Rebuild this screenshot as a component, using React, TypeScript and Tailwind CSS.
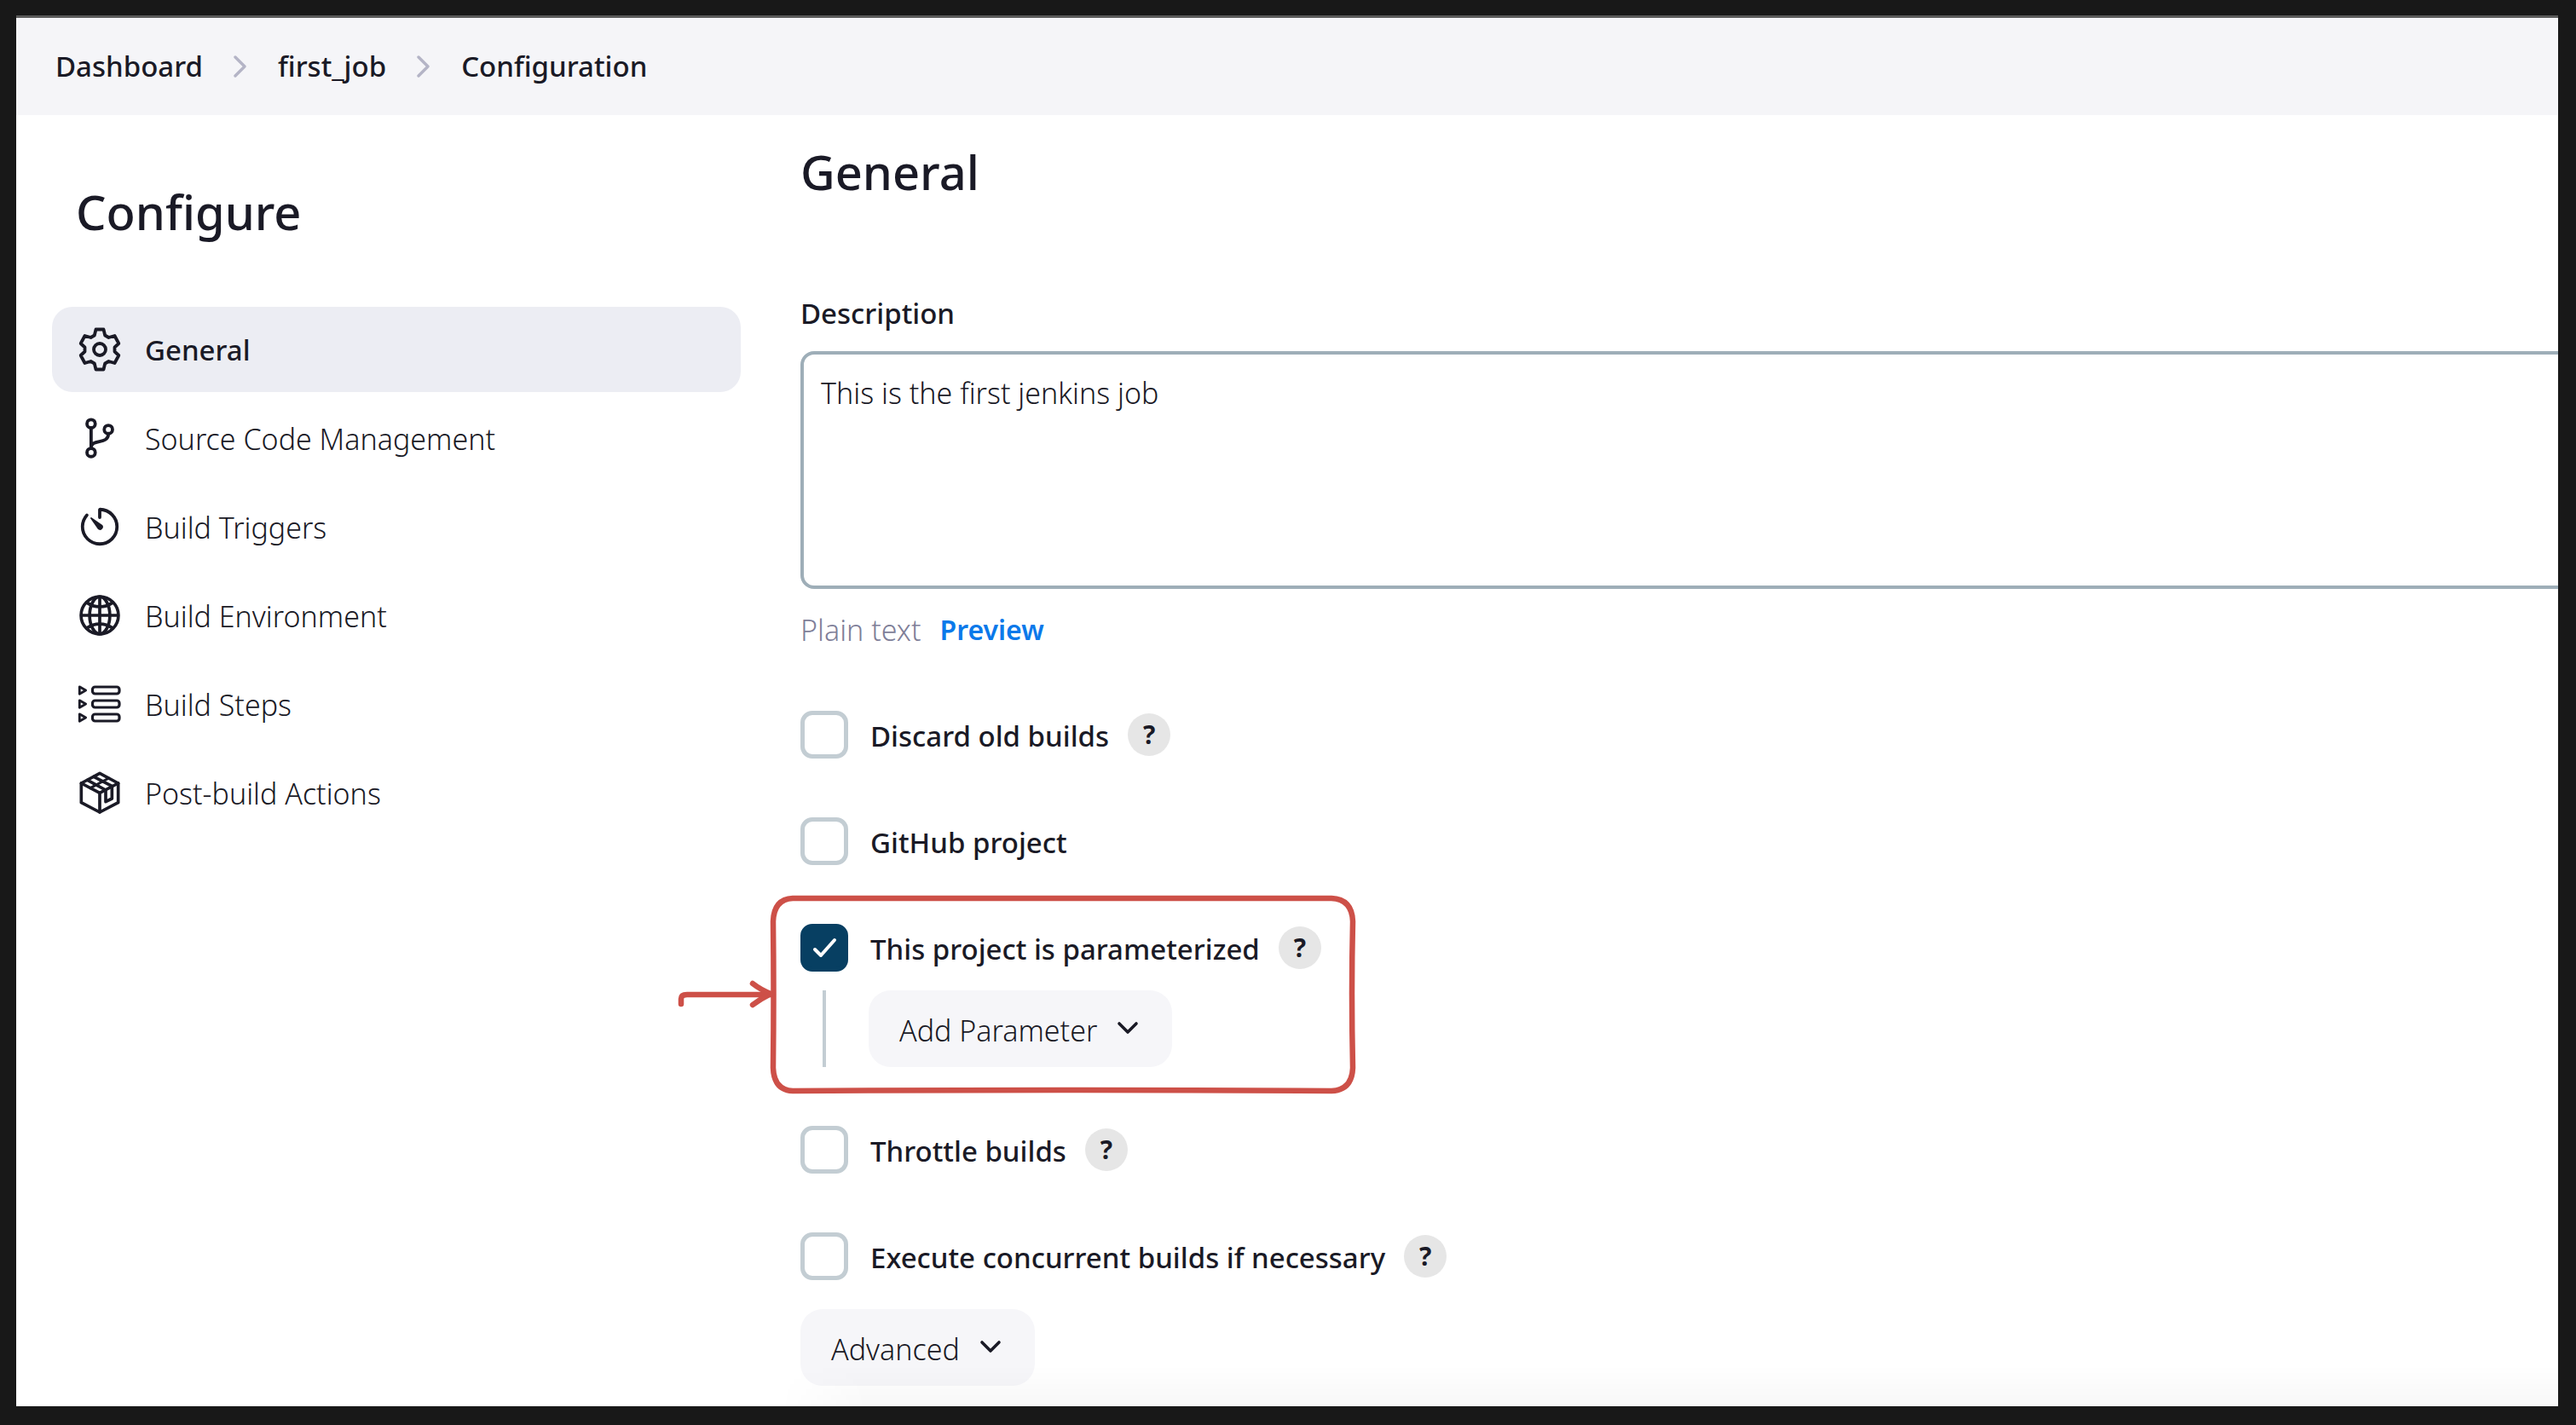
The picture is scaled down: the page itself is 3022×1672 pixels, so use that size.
import { ReactNode, useState } from "react";

const Gear = () => (
  <svg viewBox="5.5 7 54 54" className="size-[54px] shrink-0" fill="none" stroke="currentColor" strokeWidth="3.8" strokeLinejoin="round" aria-hidden="true">
    <path d="M28 10.5H37L38.7 17.5L43 20L50 18L54.8 27L50 31.5V36.5L54.8 41L50 50L43 48L38.7 50.5L37 57.5H28L26.3 50.5L22 48L15 50L10.2 41L15 36.5V31.5L10.2 27L15 18L22 20L26.3 17.5Z" />
    <circle cx="32.5" cy="34" r="7" />
  </svg>
);

const Branch = () => (
  <svg viewBox="0 0 512 512" className="size-[54px] shrink-0" fill="none" stroke="currentColor" strokeWidth="36" strokeLinecap="round" strokeLinejoin="round" aria-hidden="true">
    <circle cx="160" cy="96" r="46" />
    <circle cx="160" cy="416" r="46" />
    <circle cx="352" cy="160" r="46" />
    <path d="M160 368V144M352 208c0 128-192 48-192 160" />
  </svg>
);

const Timer = () => (
  <svg viewBox="0 0 512 512" className="size-[54px] shrink-0" aria-hidden="true">
    <path
      d="M112.91 128A191.85 191.85 0 0064 254c-1.18 106.35 85.65 193.8 192 194 106.2.2 192-85.83 192-192 0-104.54-83.55-189.61-187.5-192a4.36 4.36 0 00-4.5 4.37V152"
      fill="none"
      stroke="currentColor"
      strokeWidth="36"
      strokeLinecap="round"
      strokeLinejoin="round"
    />
    <path fill="currentColor" d="M233.38 278.63l-79-113a8.13 8.13 0 0111.32-11.32l113 79a32.5 32.5 0 01-37.25 53.26 33.21 33.21 0 01-8.07-7.94z" />
  </svg>
);

const Globe = () => (
  <svg viewBox="0 0 512 512" className="size-[54px] shrink-0" fill="none" stroke="currentColor" strokeWidth="35" strokeMiterlimit="10" aria-hidden="true">
    <path d="M256 48C141.13 48 48 141.13 48 256s93.13 208 208 208 208-93.13 208-208S370.87 48 256 48z" />
    <path d="M256 48c-58.07 0-112.67 93.13-112.67 208S197.93 464 256 464s112.67-93.13 112.67-208S314.07 48 256 48z" />
    <path strokeLinecap="round" d="M117.33 117.33c38.24 27.15 86.38 43.34 138.67 43.34s100.43-16.19 138.67-43.34M394.67 394.67c-38.24-27.15-86.38-43.34-138.67-43.34s-100.43 16.19-138.67 43.34" />
    <path d="M256 48v416M464 256H48" />
  </svg>
);

const Steps = () => (
  <svg viewBox="6 9 54 54" className="size-[54px] shrink-0" fill="none" stroke="currentColor" strokeLinejoin="round" aria-hidden="true">
    {[20, 36, 52].map((y) => (
      <g key={y}>
        <path strokeWidth="2.8" d={`M9.3 ${y - 4.2}L16.6 ${y}L9.3 ${y + 4.2}Z`} />
        <rect strokeWidth="3.2" x="24.5" y={y - 4} width="31.5" height="8" rx="3" />
      </g>
    ))}
  </svg>
);

const Package = () => (
  <svg viewBox="149 730 162 162" className="size-[54px] shrink-0" fill="none" stroke="currentColor" strokeWidth="11" strokeLinejoin="round" strokeLinecap="round" aria-hidden="true">
    <path d="M230 743L295 778V846L230 880L165 846V778Z" />
    <path d="M165 778L230 812L295 778M230 812V880" />
    <path d="M187 767L251 802V843L273 832V788L209 755" />
    <path d="M197 795L262 760" strokeWidth="9" />
  </svg>
);

const ChevronDown = () => (
  <svg viewBox="0 0 28 18" className="mb-1 h-[18px] w-7 shrink-0" fill="none" stroke="currentColor" strokeWidth="3.6" strokeLinecap="round" strokeLinejoin="round" aria-hidden="true">
    <path d="M4 3L14 13L24 3" />
  </svg>
);

const ChevronRight = () => (
  <svg viewBox="0 0 16 26" className="h-[26px] w-4 shrink-0 text-[#b4b4c6]" fill="none" stroke="currentColor" strokeWidth="3.4" strokeLinecap="round" strokeLinejoin="round" aria-hidden="true">
    <path d="M2 2L13 13L2 24" />
  </svg>
);

const NAV: { label: string; icon: ReactNode }[] = [
  { label: "General", icon: <Gear /> },
  { label: "Source Code Management", icon: <Branch /> },
  { label: "Build Triggers", icon: <Timer /> },
  { label: "Build Environment", icon: <Globe /> },
  { label: "Build Steps", icon: <Steps /> },
  { label: "Post-build Actions", icon: <Package /> },
];

function Option({ id, label, help, checked = false }: { id: string; label: string; help?: boolean; checked?: boolean }) {
  const [on, setOn] = useState(checked);
  return (
    <div className="flex h-14 items-center">
      <span className="grid size-14 shrink-0">
        <input
          id={id}
          type="checkbox"
          checked={on}
          onChange={(e) => setOn(e.target.checked)}
          className="col-start-1 row-start-1 size-14 appearance-none rounded-[14px] border-[5px] border-[#c3cdd3] bg-white checked:border-[#073f62] checked:bg-[#073f62]"
        />
        {on && (
          <svg viewBox="0 0 56 56" className="pointer-events-none col-start-1 row-start-1 size-14" fill="none" stroke="#ffffff" strokeWidth="4" strokeLinecap="round" strokeLinejoin="round" aria-hidden="true">
            <path d="M17 30L24 37L40 19" />
          </svg>
        )}
      </span>
      <label htmlFor={id} className="pt-1 pl-[26px] text-[33px] leading-[48px] font-medium whitespace-nowrap">
        {label}
      </label>
      {help && (
        <button type="button" aria-label={`Help for ${label}`} className="ml-[22px] flex size-[50px] shrink-0 items-center justify-center rounded-full bg-[#e6e6e6] text-[30px] leading-none font-bold">
          ?
        </button>
      )}
    </div>
  );
}

function MenuButton({ children }: { children: ReactNode }) {
  return (
    <button type="button" className="flex h-[90px] items-center gap-[22px] rounded-[26px] bg-[#f6f6f9] pt-1 pr-[38px] pl-9 text-[34px] leading-[48px] font-light whitespace-nowrap">
      {children}
      <ChevronDown />
    </button>
  );
}

const Highlight = () => (
  <svg viewBox="0 0 802 244" className="pointer-events-none absolute -top-[39px] -left-[145px] h-[244px] w-[802px]" fill="none" stroke="#cd5048" strokeWidth="6.5" strokeLinecap="round" strokeLinejoin="round" aria-hidden="true">
    <path d="M136 9H768Q792 10 793 36Q791 120 793 208Q792 234 768 235Q450 233 136 235Q114 234 113 208Q114 120 113 36Q114 10 136 9Z" />
    <path d="M5 133V127Q5 122 12 122H111" />
    <path d="M89 109Q98 116 110 121Q98 127 89 134" />
  </svg>
);

export default function App() {
  return (
    <div className="flex min-h-screen flex-col bg-[#181818] pt-[18px] pr-[21px] pb-[22px] pl-[19px] font-['Noto_Sans',sans-serif] text-[#1a1a26]">
      <div className="relative flex grow flex-col overflow-hidden bg-white">
        <header className="border-t-[3px] border-[#5a5a5a] bg-[#f5f5f8]">
          <nav aria-label="Breadcrumb" className="flex h-[114px] items-center gap-9 pl-[46px] text-[33px] leading-[48px] font-medium">
            <a href="#dashboard">Dashboard</a>
            <ChevronRight />
            <a href="#first_job">first_job</a>
            <ChevronRight />
            <a href="#configuration">Configuration</a>
          </nav>
        </header>

        <div className="grid grow grid-cols-[2fr_5fr]">
          <aside className="pt-[77px] pr-0.5 pl-[42px]">
            <h1 className="pl-7 text-[56px] leading-[72px] font-medium">Configure</h1>
            <nav aria-label="Configure" className="mt-[76px] flex flex-col gap-1">
              {NAV.map(({ label, icon }, i) => (
                <a
                  key={label}
                  href={`#${label.toLowerCase().replace(/ /g, "-")}`}
                  aria-current={i === 0 ? "true" : undefined}
                  className="flex h-[100px] items-center gap-[26px] rounded-[24px] pl-[29px] text-[34px] leading-[48px] font-light aria-[current]:bg-[#ecedf3] aria-[current]:text-[33px] aria-[current]:font-medium"
                >
                  {icon}
                  <span className="pt-0.5">{label}</span>
                </a>
              ))}
            </nav>
          </aside>

          <main className="min-w-0 pt-[30px] pl-[68px]">
            <h2 className="text-[56px] leading-[72px] font-medium">General</h2>
            <label htmlFor="description" className="mt-[107px] block text-[33px] leading-[48px] font-medium">
              Description
            </label>
            <div className="-mr-6 mt-5">
              <textarea
                id="description"
                defaultValue="This is the first jenkins job"
                className="block h-[279px] w-full resize-none rounded-[16px] border-4 border-[#9eaeb8] bg-white px-5 py-5 text-[34px] leading-[50px] font-light"
              />
            </div>
            <div className="mt-6 flex gap-[22px] text-[34px] leading-[48px] font-light">
              <span className="text-[#7f7f99]">Plain text</span>
              <a href="#preview" className="text-[32px] font-semibold text-[#0b79ea]">
                Preview
              </a>
            </div>

            <div className="mt-[71px] flex flex-col gap-[69px]">
              <Option id="discard" label="Discard old builds" help />
              <Option id="github" label="GitHub project" />
              <div className="relative">
                <Option id="parameterized" label="This project is parameterized" help checked />
                <div className="mt-[22px] ml-[26px] flex border-l-4 border-[#c3cdd3] pl-[50px]">
                  <MenuButton>Add Parameter</MenuButton>
                </div>
                <Highlight />
              </div>
              <Option id="throttle" label="Throttle builds" help />
              <Option id="concurrent" label="Execute concurrent builds if necessary" help />
            </div>
            <div className="mt-[34px] flex">
              <MenuButton>Advanced</MenuButton>
            </div>
          </main>
        </div>
        <div className="pointer-events-none absolute right-0 bottom-0 left-[30%] h-12 bg-linear-to-b from-transparent to-black/3 mask-l-from-95%" />
      </div>
    </div>
  );
}
